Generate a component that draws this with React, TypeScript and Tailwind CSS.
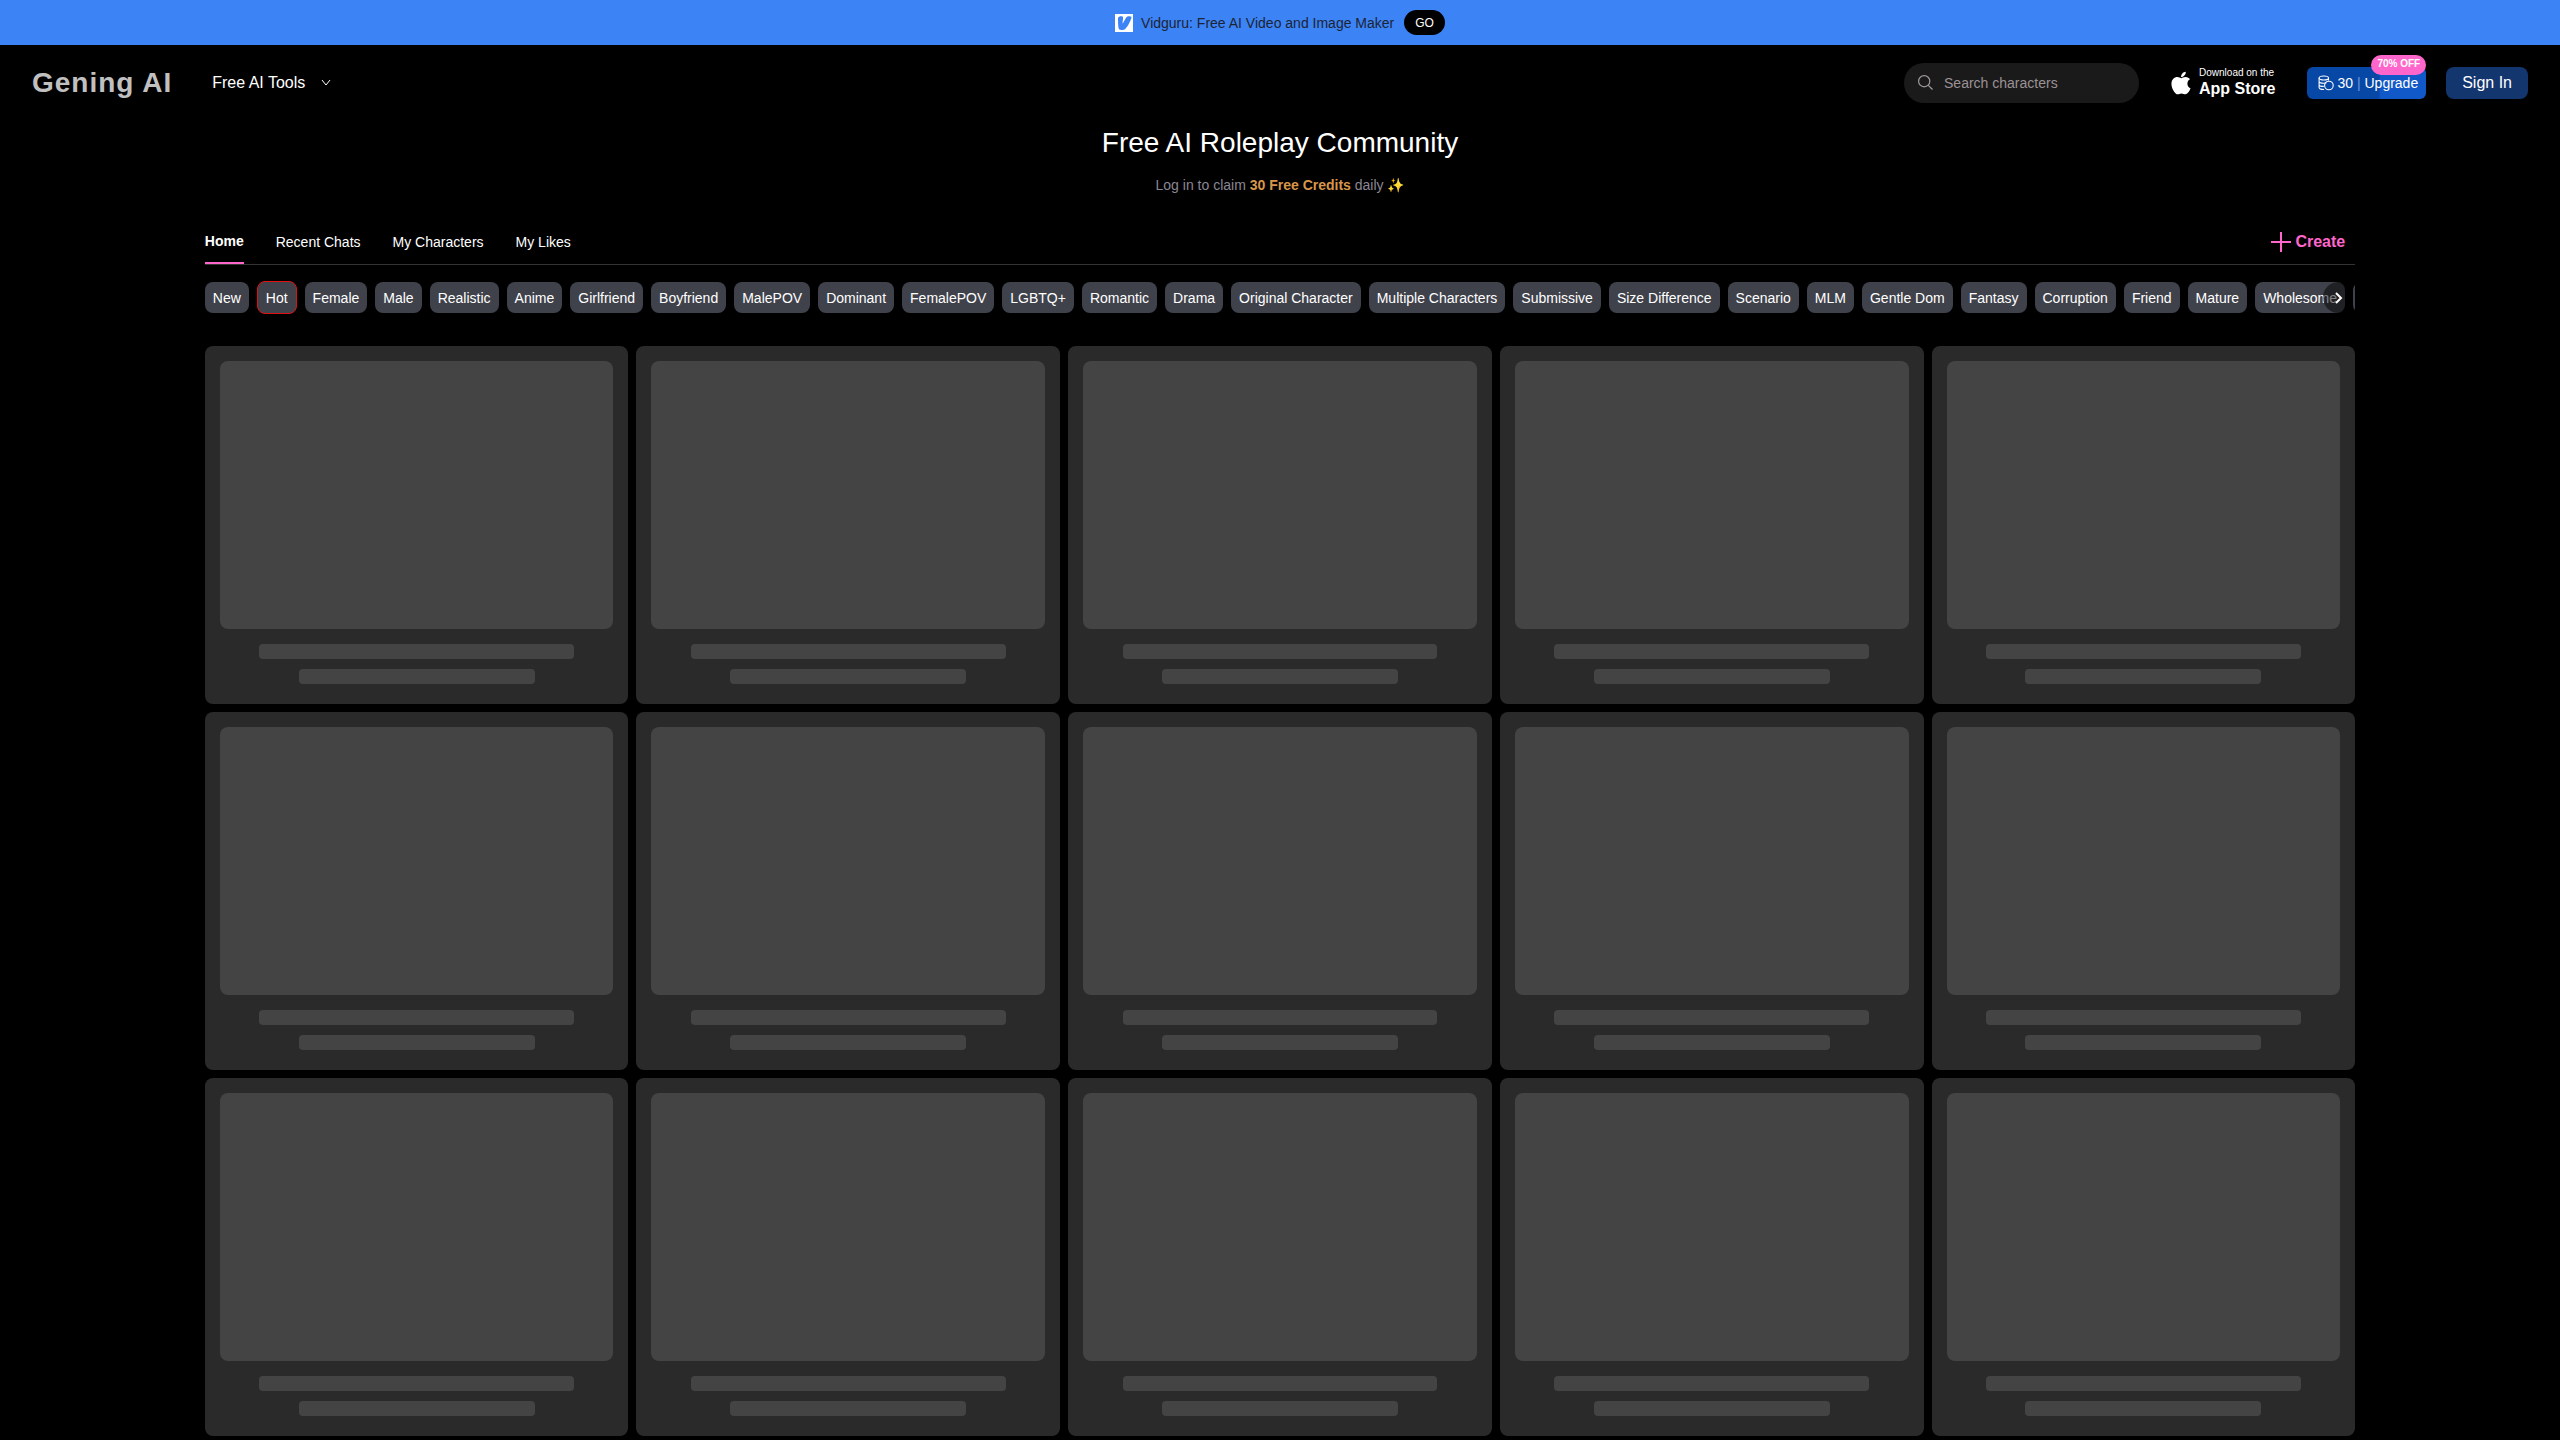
import React, { useState } from "react";
import { FaApple } from "react-icons/fa";

const tabs = ["Home", "Recent Chats", "My Characters", "My Likes"];

const tags = [
  "New",
  "Hot",
  "Female",
  "Male",
  "Realistic",
  "Anime",
  "Girlfriend",
  "Boyfriend",
  "MalePOV",
  "Dominant",
  "FemalePOV",
  "LGBTQ+",
  "Romantic",
  "Drama",
  "Original Character",
  "Multiple Characters",
  "Submissive",
  "Size Difference",
  "Scenario",
  "MLM",
  "Gentle Dom",
  "Fantasy",
  "Corruption",
  "Friend",
  "Mature",
  "Wholesome",
];

function Banner() {
  return (
    <div className="flex h-[45px] items-center justify-center bg-[#3c83f6]">
      {/* vidguru logo */}
      <svg width="18" height="18" viewBox="0 0 18 18" aria-hidden="true">
        <rect width="18" height="18" fill="#fff" />
        <path
          d="M3 4C3.500 2.300 7.600 1.500 8 3.300c.3 1.500-.5 4-.4 6.400C9 7.500 10.300 5 11.200 3.500c.8-1.300 4.200-1.700 5.300-.6C16 6.500 13 12 10.200 15c-1 1-4.600 1.300-5.800.6C3 14.800 3.100 8 3 4z"
          fill="#3c83f6"
        />
      </svg>
      <a href="#" className="ml-2 text-sm text-[#1c2333]">
        Vidguru: Free AI Video and Image Maker
      </a>
      <button className="ml-[10px] h-[25px] rounded-full bg-black px-[11px] text-xs text-white">
        GO
      </button>
    </div>
  );
}

function CoinsIcon() {
  return (
    <svg
      width="16"
      height="16"
      viewBox="0 0 16 16"
      fill="none"
      stroke="currentColor"
      strokeWidth="1.1"
      aria-hidden="true"
    >
      <ellipse cx="5.800" cy="3" rx="4.700" ry="2" />
      <path d="M1.100 3v9.500c0 1.200 2 2 5 2M10.500 3v2.600M1.100 6.200c0 1.200 2 2 4.700 2 1.200 0 2-.1 2.700-.4M1.100 9.400c0 1.200 2 2 4.700 2" />
      <circle cx="10.900" cy="10.500" r="4.300" />
    </svg>
  );
}

function Header() {
  return (
    <header className="flex h-[75px] items-center justify-between px-8">
      <div className="flex items-center">
        {/* logo */}
        <a href="#" className="text-[28px] font-bold tracking-[1px] text-[#c0c0c0]">
          Gening AI
        </a>
        <button className="ml-10 flex items-center gap-4 text-base">
          Free AI Tools
          <svg width="10" height="10" viewBox="0 0 10 10" fill="none" stroke="currentColor" aria-hidden="true">
            <path d="M1 2l4 5 4-5" />
          </svg>
        </button>
      </div>

      <div className="flex items-center">
        {/* search */}
        <label className="flex h-10 w-[235px] items-center rounded-full bg-[#1a1a1a] pl-[14px]">
          <svg
            width="15"
            height="15"
            viewBox="0 0 15 15"
            fill="none"
            stroke="#a09a9e"
            strokeWidth="1.2"
            aria-hidden="true"
          >
            <circle cx="6.200" cy="6.200" r="5.600" />
            <path d="M10.300 10.300l4.200 4.200" />
          </svg>
          <input
            type="text"
            aria-label="Search characters"
            placeholder="Search characters"
            className="ml-[11px] w-44 bg-transparent text-sm outline-none placeholder:text-[#9a9296]"
          />
        </label>
        {/* app store */}
        <a href="#" className="ml-[30px] flex items-center gap-[6px]">
          <FaApple className="h-[26px] w-6" />
          <span className="flex flex-col">
            <span className="text-[10px] leading-3">Download on the</span>
            <span className="text-base font-bold leading-5">App Store</span>
          </span>
        </a>
        {/* upgrade */}
        <button className="relative ml-8 flex h-8 items-center gap-[3px] rounded-md bg-linear-to-r from-[#0747a6] from-60% to-[#1158c8] to-62% pr-2 pl-[11px] text-sm">
          <CoinsIcon />
          <span>
            30 <span className="text-[#6f97d8]">|</span> Upgrade
          </span>
          <span className="absolute -top-3 right-0 flex h-5 items-center rounded-full bg-[#ff66cc] px-[6px] text-[10px] font-bold">
            70% OFF
          </span>
        </button>
        <button className="ml-5 h-8 rounded-lg bg-[#14366f] px-4 text-base">Sign In</button>
      </div>
    </header>
  );
}

function SkeletonCard() {
  return (
    <div className="flex flex-col items-center rounded-lg bg-[#2a2a2a] px-[15px] pt-[15px] pb-5">
      <div className="h-[268px] w-full rounded-lg bg-[#444]"></div>
      <div className="mt-[15px] h-[15px] w-4/5 rounded bg-[#444]"></div>
      <div className="mt-[10px] h-[15px] w-3/5 rounded bg-[#444]"></div>
    </div>
  );
}

export default function App() {
  const [activeTab, setActiveTab] = useState("Home");
  const [activeTag, setActiveTag] = useState("Hot");

  return (
    <div className="min-h-screen bg-black font-['Liberation_Sans',Arial,sans-serif] text-white">
      <Banner />
      <Header />

      <main className="mx-auto w-[84%]">
        {/* title */}
        <div className="pt-[5px] text-center">
          <h1 className="text-[28px] leading-9">Free AI Roleplay Community</h1>
          <p className="mt-[14px] h-5 text-sm text-[#8a8794]">
            Log in to claim <b className="text-[#d8964a]">30 Free Credits</b> daily ✨
          </p>
        </div>

        {/* tabs */}
        <div className="mt-[22px] flex h-12 items-end justify-between border-b border-[#333]">
          <nav className="flex items-end gap-8">
            {tabs.map((tab) => (
              <button
                key={tab}
                onClick={() => setActiveTab(tab)}
                className={
                  tab === activeTab
                    ? "h-[33px] border-b-2 border-[#ff66cc] pb-[11px] text-sm font-bold"
                    : "h-[33px] pb-[11px] text-sm"
                }
              >
                {tab}
              </button>
            ))}
          </nav>
          <button className="mr-[10px] mb-[10px] flex items-center gap-1 text-base font-bold leading-6 text-[#ff66cc]">
            <svg width="20" height="20" viewBox="0 0 20 20" stroke="currentColor" strokeWidth="2" aria-hidden="true">
              <path d="M10 0v20M0 10h20" />
            </svg>
            Create
          </button>
        </div>

        {/* tags */}
        <div className="relative mt-4">
          <div className="flex h-[33px] items-center gap-2 overflow-hidden">
            {tags.map((tag) => (
              <button
                key={tag}
                onClick={() => setActiveTag(tag)}
                className={
                  tag === activeTag
                    ? "h-[33px] shrink-0 rounded-lg border border-[#e01010] bg-[#40424b] px-2 text-sm"
                    : "h-[31px] shrink-0 rounded-lg bg-[#40424b] px-2 text-sm"
                }
              >
                {tag}
              </button>
            ))}
            {/* edge of the next tag */}
            <span className="h-[31px] w-14 shrink-0 rounded-lg bg-[#40424b]" aria-hidden="true"></span>
          </div>
          <button
            aria-label="Next"
            className="absolute top-px right-[10px] flex h-[31px] w-[22px] items-center justify-end rounded-l-full rounded-r-lg bg-black/50 pr-[2px]"
          >
            <svg width="8" height="12" viewBox="0 0 8 12" fill="none" stroke="#fff" strokeWidth="2" aria-hidden="true">
              <path d="M1 1l5 5-5 5" />
            </svg>
          </button>
        </div>

        {/* loading cards */}
        <div className="mt-8 grid grid-cols-5 gap-2">
          {Array.from({ length: 15 }).map((_, i) => (
            <SkeletonCard key={i} />
          ))}
        </div>
      </main>
    </div>
  );
}
